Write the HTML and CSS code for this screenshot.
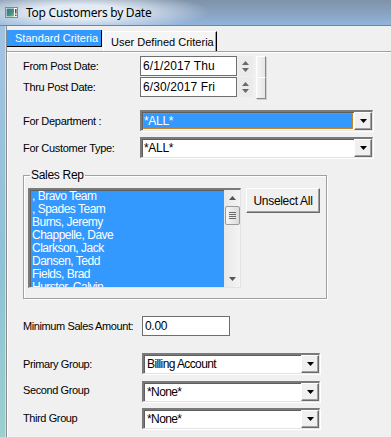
FILE: index.html
```html
<!DOCTYPE html>
<html>
<head>
<meta charset="utf-8">
<title>Top Customers by Date</title>
<link rel="stylesheet" href="styles.css">
</head>
<body>
<div class="window">
  <div class="titlebar">
    <svg class="appicon" width="13" height="11" viewBox="0 0 13 11">
      <defs>
        <linearGradient id="ig" x1="0" y1="0" x2="1" y2="1">
          <stop offset="0" stop-color="#3f6f9a"/>
          <stop offset="0.55" stop-color="#3b8f86"/>
          <stop offset="1" stop-color="#7fbf6a"/>
        </linearGradient>
      </defs>
      <rect x="0.5" y="0.5" width="12" height="10" fill="#ffffff" stroke="#7d8a96"/>
      <rect x="1.5" y="1.5" width="7.5" height="8" fill="url(#ig)"/>
      <rect x="10" y="2" width="1.6" height="4.5" fill="#555"/>
      <rect x="10" y="7.5" width="1.6" height="1.6" fill="#555"/>
    </svg>
    <span class="title">Top Customers by Date</span>
  </div>
  <div class="frame">
    <div class="sideframe"></div>
    <div class="client">
      <div class="tabs">
        <div class="tab tab-active">Standard Criteria</div>
        <div class="tab tab-idle">User Defined Criteria</div>
      </div>
      <div class="panel">
        <div class="row row-from">
          <span class="label">From Post Date:</span>
          <div class="textbox datebox">6/1/2017 Thu</div>
          <div class="spin">
            <svg width="7" height="4" viewBox="0 0 7 4"><path d="M3.5 0 L7 4 L0 4 Z" fill="#6a6a6a"/></svg>
            <svg width="7" height="4" viewBox="0 0 7 4"><path d="M0 0 L7 0 L3.5 4 Z" fill="#6a6a6a"/></svg>
          </div>
          <div class="slider"></div>
        </div>
        <div class="row row-thru">
          <span class="label">Thru Post Date:</span>
          <div class="textbox datebox">6/30/2017 Fri</div>
          <div class="spin">
            <svg width="7" height="4" viewBox="0 0 7 4"><path d="M3.5 0 L7 4 L0 4 Z" fill="#6a6a6a"/></svg>
            <svg width="7" height="4" viewBox="0 0 7 4"><path d="M0 0 L7 0 L3.5 4 Z" fill="#6a6a6a"/></svg>
          </div>
          <div class="slider"></div>
        </div>
        <div class="row row-dept">
          <span class="label">For Department :</span>
          <div class="combo combo-wide">
            <div class="combo-text combo-selected"><span>*ALL*</span></div>
            <div class="dropbtn"><svg width="7" height="4" viewBox="0 0 7 4"><path d="M0 0 L7 0 L3.5 4 Z" fill="#000"/></svg></div>
          </div>
        </div>
        <div class="row row-cust">
          <span class="label">For Customer Type:</span>
          <div class="combo combo-wide">
            <div class="combo-text">*ALL*</div>
            <div class="dropbtn"><svg width="7" height="4" viewBox="0 0 7 4"><path d="M0 0 L7 0 L3.5 4 Z" fill="#000"/></svg></div>
          </div>
        </div>
        <fieldset class="group">
          <legend>Sales Rep</legend>
          <div class="group-body">
            <div class="listbox">
              <ul class="items">
                <li>, Bravo Team</li>
                <li>, Spades Team</li>
                <li>Burns, Jeremy</li>
                <li>Chappelle, Dave</li>
                <li>Clarkson, Jack</li>
                <li>Dansen, Tedd</li>
                <li>Fields, Brad</li>
                <li>Hurster, Calvin</li>
              </ul>
              <div class="scrollbar">
                <svg class="sb-arrow" width="7" height="4" viewBox="0 0 7 4"><path d="M3.5 0 L7 4 L0 4 Z" fill="#555"/></svg>
                <div class="thumb"><i></i><i></i><i></i><i></i></div>
                <div class="sb-track"></div>
                <svg class="sb-arrow" width="7" height="4" viewBox="0 0 7 4"><path d="M0 0 L7 0 L3.5 4 Z" fill="#555"/></svg>
              </div>
            </div>
            <div class="button">Unselect All</div>
          </div>
        </fieldset>
        <div class="row row-min">
          <span class="label label-b">Minimum Sales Amount:</span>
          <div class="textbox amountbox">0.00</div>
        </div>
        <div class="row row-prim">
          <span class="label label-b">Primary Group:</span>
          <div class="combo combo-narrow">
            <div class="combo-text combo-text-b">Billing Account</div>
            <div class="dropbtn"><svg width="7" height="4" viewBox="0 0 7 4"><path d="M0 0 L7 0 L3.5 4 Z" fill="#000"/></svg></div>
          </div>
        </div>
        <div class="row row-second">
          <span class="label label-b label-up">Second Group</span>
          <div class="combo combo-narrow">
            <div class="combo-text combo-text-b">*None*</div>
            <div class="dropbtn"><svg width="7" height="4" viewBox="0 0 7 4"><path d="M0 0 L7 0 L3.5 4 Z" fill="#000"/></svg></div>
          </div>
        </div>
        <div class="row row-third">
          <span class="label label-b">Third Group</span>
          <div class="combo combo-narrow">
            <div class="combo-text combo-text-b">*None*</div>
            <div class="dropbtn"><svg width="7" height="4" viewBox="0 0 7 4"><path d="M0 0 L7 0 L3.5 4 Z" fill="#000"/></svg></div>
          </div>
        </div>
      </div>
    </div>
  </div>
</div>
</body>
</html>
```

FILE: styles.css
```css
* { box-sizing: border-box; }
html, body { margin: 0; padding: 0; }
body {
  width: 391px;
  height: 437px;
  overflow: hidden;
  background: #f0f0f0;
  font-family: "Liberation Sans", Arial, sans-serif;
  font-size: 11px;
  color: #000;
}
.window { display: flex; flex-direction: column; height: 437px; }

.titlebar {
  height: 26px;
  flex: none;
  display: flex;
  align-items: center;
  padding-left: 5px;
  padding-bottom: 1px;
  gap: 8px;
  background:
    radial-gradient(ellipse 130px 20px at 80px 12px, rgba(232,239,247,0.95) 35%, rgba(232,239,247,0) 100%),
    linear-gradient(#7f93a9, #88a3c2 55%, #92b5dc);
  border-bottom: 1px solid #6a86a6;
}
.appicon { display: block; flex: none; }
.title {
  font-family: "Noto Sans", "Open Sans", sans-serif;
  font-size: 12px;
  color: #000;
  letter-spacing: -0.25px;
}

.frame { flex: 1; display: flex; min-height: 0; }
.sideframe {
  width: 6px;
  flex: none;
  background: linear-gradient(#a3c2e2, #8ec3d6 60%, #9ad0cf);
  border-right: 1px solid #d8dde2;
}
.client {
  flex: 1;
  display: flex;
  flex-direction: column;
  border-left: 1px solid #8a8a8a;
  background: #f0f0f0;
}

.tabs {
  height: 25px;
  flex: none;
  display: flex;
  align-items: flex-start;
  padding-top: 4px;
}
.tab { display: flex; align-items: center; white-space: nowrap; }
.tab-active {
  width: 95px;
  height: 17px;
  background: #3399ff;
  color: #fff;
  padding-left: 8px;
  border-right: 1px solid #000;
  border-bottom: 1px solid #000;
}
.tab-idle {
  width: 114px;
  height: 21px;
  margin-top: 1px;
  margin-left: 1px;
  background: #f5f5f5;
  padding-left: 7px;
  border-top: 1px solid #fff;
  border-left: 1px solid #fff;
  border-right: 1px solid #000;
  box-shadow: inset -1px 0 0 #a0a0a0;
}

.panel {
  flex: 1;
  border-top: 1px solid #a0a0a0;
  box-shadow: inset 1px 1px 0 #fff;
  padding-left: 16px;
  display: flex;
  flex-direction: column;
}

.row { display: flex; align-items: center; height: 20px; }
.label { width: 117px; flex: none; white-space: nowrap; letter-spacing: -0.3px; }
.label-b { width: 118px; letter-spacing: -0.4px; }
.label-up { margin-top: -3px; }

.row-from { margin-top: 4px; }
.row-thru { margin-top: 1px; }
.row-dept { margin-top: 13px; height: 21px; }
.row-cust { margin-top: 6px; height: 21px; }
.row-min { margin-top: 17px; }
.row-prim { margin-top: 17px; height: 21px; }
.row-second { margin-top: 7px; height: 21px; }
.row-third { margin-top: 6px; height: 20px; }

.textbox {
  height: 20px;
  background: #fff;
  border: 1px solid #6e6e6e;
  padding-left: 2px;
  display: flex;
  align-items: center;
  white-space: nowrap;
}
.datebox { width: 97px; font-size: 12px; letter-spacing: 0.1px; }
.amountbox { width: 88px; margin-left: 1px; font-size: 12px; letter-spacing: -0.3px; }

.spin {
  width: 15px;
  height: 20px;
  margin-left: 1px;
  background: #ebebeb;
  display: flex;
  flex-direction: column;
  align-items: center;
  justify-content: center;
  gap: 3px;
  align-self: flex-start;
}
.spin svg { display: block; }
.slider {
  width: 10px;
  height: 22px;
  margin-left: 3px;
  align-self: flex-start;
  background: linear-gradient(to right, #f4f4f4, #e6e6e6);
  border-top: 1px solid #fff;
  border-left: 1px solid #fff;
  border-right: 1px solid #888;
  border-bottom: 1px solid #888;
  box-shadow: 1px 1px 0 #d0d0d0;
}

.combo {
  height: 21px;
  background: #fff;
  display: flex;
  border-top: 2px solid #7a7a7a;
  border-left: 2px solid #7a7a7a;
  border-right: 1px solid #e3e3e3;
  border-bottom: 1px solid #e3e3e3;
  box-shadow: 1px 1px 0 #fff, inset 1px 1px 0 #5f5f5f;
}
.combo-wide { width: 233px; }
.combo-narrow { width: 178px; margin-left: 1px; }
.combo-text {
  flex: 1;
  display: flex;
  align-items: center;
  padding-left: 2px;
  white-space: nowrap;
  font-size: 12px;
  letter-spacing: -0.3px;
}
.combo-text-b { letter-spacing: -0.6px; padding-left: 3px; }
.combo-selected { padding: 1px; }
.combo-selected span {
  flex: 1;
  align-self: stretch;
  display: flex;
  align-items: center;
  background: #3399ff;
  color: #fff;
  padding-left: 1px;
  outline: 1px dotted #d08a30;
  outline-offset: -1px;
}
.dropbtn {
  width: 18px;
  flex: none;
  background: #f0f0f0;
  border-top: 1px solid #fff;
  border-left: 1px solid #fff;
  border-right: 1px solid #6a6a6a;
  border-bottom: 1px solid #6a6a6a;
  box-shadow: inset -1px -1px 0 #a0a0a0;
  display: flex;
  align-items: center;
  justify-content: center;
}
.dropbtn svg { display: block; }

.group {
  margin: 11px 0 0 0;
  padding: 6px 4px 10px 4px;
  width: 304px;
  min-inline-size: 0;
  border: 1px solid #a0a0a0;
  box-shadow: inset 1px 1px 0 #fff, 1px 1px 0 #fff;
}
.group legend {
  padding: 0 1px;
  margin-left: 2px;
  font-size: 12px;
  line-height: 13px;
  letter-spacing: -0.3px;
}
.group-body { display: flex; align-items: flex-start; gap: 5px; }

.listbox {
  width: 213px;
  height: 100px;
  display: flex;
  background: #3399ff;
  border-top: 2px solid #7a7a7a;
  border-left: 2px solid #7a7a7a;
  border-right: 1px solid #e3e3e3;
  border-bottom: 1px solid #e3e3e3;
  box-shadow: inset 1px 1px 0 #5f5f5f;
  overflow: hidden;
}
.items {
  flex: 1;
  list-style: none;
  margin: 0;
  padding: 0 0 0 2px;
  color: #fff;
  font-size: 12px;
  line-height: 13px;
  letter-spacing: -0.5px;
  white-space: nowrap;
  overflow: hidden;
}
.scrollbar {
  width: 16px;
  flex: none;
  background: linear-gradient(to right, #e8e8e8, #f4f4f4);
  display: flex;
  flex-direction: column;
  align-items: center;
  padding-top: 6px;
  padding-bottom: 6px;
}
.sb-arrow { display: block; flex: none; }
.thumb {
  width: 15px;
  height: 19px;
  margin-top: 6px;
  border: 1px solid #9a9a9a;
  border-radius: 2px;
  background: linear-gradient(to right, #f6f6f6, #dcdcdc);
  display: flex;
  flex-direction: column;
  align-items: center;
  justify-content: center;
  gap: 1px;
}
.thumb i { display: block; width: 7px; height: 1px; background: #6b6b6b; }
.sb-track { flex: 1; }

.button {
  width: 74px;
  height: 25px;
  background: #f0f0f0;
  border-top: 1px solid #fff;
  border-left: 1px solid #fff;
  border-right: 1px solid #6a6a6a;
  border-bottom: 1px solid #6a6a6a;
  box-shadow: inset -1px -1px 0 #a0a0a0;
  display: flex;
  align-items: center;
  justify-content: center;
  font-size: 12px;
  letter-spacing: -0.3px;
  white-space: nowrap;
}
```
